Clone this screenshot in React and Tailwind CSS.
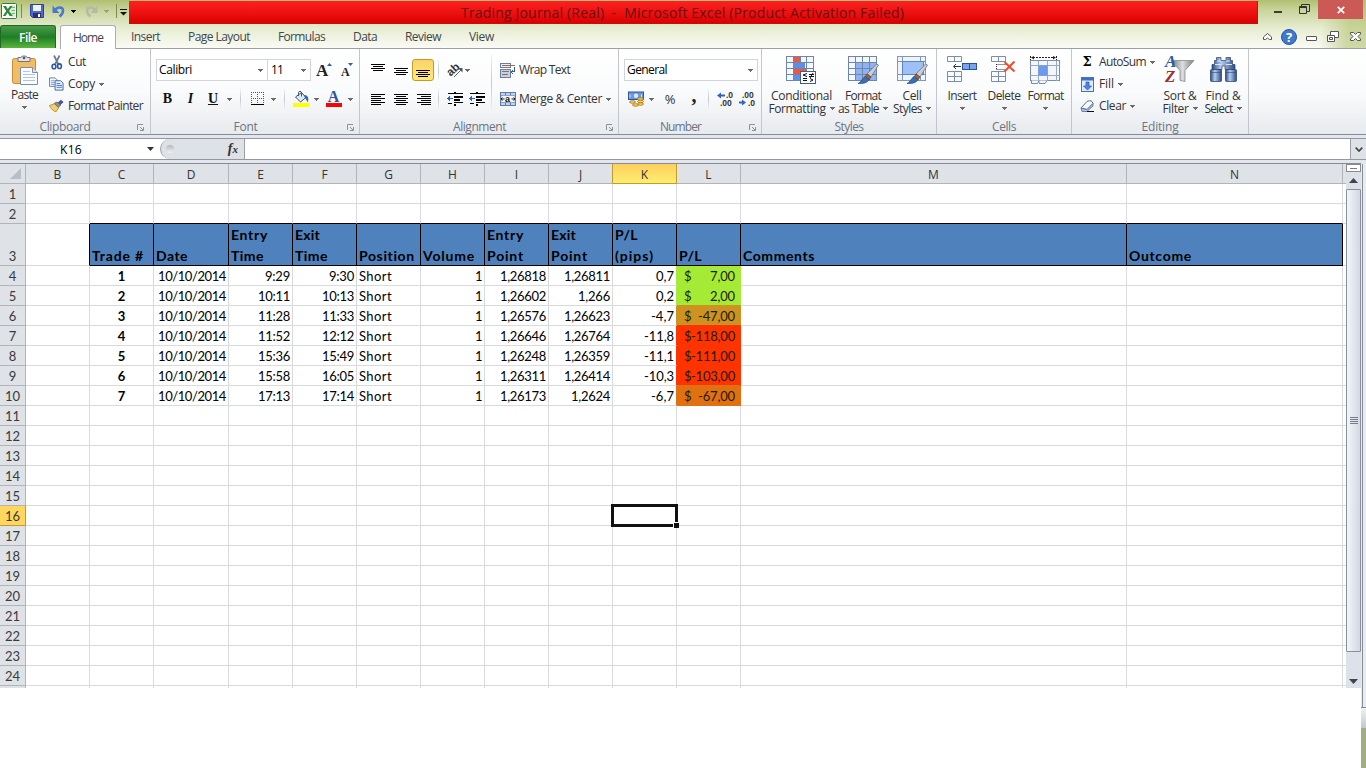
import React, { useLayoutEffect, useRef, useState } from 'react';

// Text that is tracked in or out until it fills the given width
const Fit = ({ w, children, className = '' }) => {
  const ref = useRef(null);
  const [spacing, setSpacing] = useState(0);

  useLayoutEffect(() => {
    const natural = ref.current.getBoundingClientRect().width;
    setSpacing((w - natural) / String(children).length);
  }, [w, children]);

  return (
    <span ref={ref} className={`inline-block whitespace-pre shrink-0 ${className}`} style={{ letterSpacing: `${spacing}px` }}>
      {children}
    </span>
  );
};

const Caret = ({ className = '' }) => (
  <svg width="5" height="3" viewBox="0 0 5 3" className={`shrink-0 ${className}`} shapeRendering="crispEdges">
    <path d="M0 0h5v1H4v1H3v1H2V2H1V1H0z" fill="#6b6b6b" />
  </svg>
);

const Sep = ({ className = '' }) => (
  <div className={`w-px bg-linear-to-b from-[#f0f1f3] via-[#c4c9d0] to-[#f0f1f3] ${className}`} />
);

/* ---------- Icons ---------- */

const ExcelIcon = () => (
  <svg width="16" height="16" viewBox="0 0 16 16">
    <rect x=".5" y=".5" width="15" height="15" rx="1" fill="#fff" stroke="#2f7d3b" />
    <path d="M10 2h4v12h-4z" fill="#d9ecd4" />
    <path d="M10.500 4.500h3.500M10.500 7.500h3.500M10.500 10.500h3.500" stroke="#7db475" />
    <path d="M2 3h3l1.800 3L9 3h2.500L8.200 8l3.600 5H8.700L6.600 9.800 4.500 13H1.800l3.400-5z" fill="#2c8a3a" />
  </svg>
);

const SaveIcon = () => (
  <svg width="14" height="14" viewBox="0 0 14 14">
    <path d="M.5.5h13v13h-11l-2-2z" fill="#4f68c8" stroke="#2f3f9c" />
    <rect x="3" y="1" width="8" height="6" fill="#eef3fb" />
    <rect x="3" y="9" width="8" height="5" fill="#2a3172" />
    <rect x="8" y="10" width="2" height="3" fill="#fff" />
  </svg>
);

const UndoIcon = ({ color }) => (
  <svg width="13" height="13" viewBox="0 0 13 13" fill="none">
    <path d="M3 5.500C5 1.500 10.800 1.500 11 5.500c.1 2.500-1.500 4.500-3.500 6" stroke={color} strokeWidth="2.500" />
    <path d="M.5.5v7.500h7z" fill={color} />
  </svg>
);

const PasteIcon = () => (
  <svg width="28" height="32" viewBox="0 0 28 32">
    <rect x="1.500" y="3.500" width="23" height="25" rx="2" fill="#f0bd66" stroke="#c98b35" />
    <path d="M7 2.500h3C10 .5 16 .5 16 2.500h3v4H7z" fill="#e4e6e9" stroke="#6f7680" />
    <circle cx="13" cy="3" r="1.300" fill="#555" />
    <path d="M9.500 12.500h12l5 5v12h-17z" fill="#f8fbff" stroke="#7c8da6" />
    <path d="M21.500 12.500v5h5" fill="#dbe5f1" stroke="#7c8da6" />
    <path d="M12 16.500h7M12 19.500h12M12 22.500h12M12 25.500h12" stroke="#b5c4d8" />
  </svg>
);

const CutIcon = () => (
  <svg width="12" height="15" viewBox="0 0 12 15" fill="none">
    <path d="M3 .5l4.500 9M8.500.5L4 9.500" stroke="#6d7a90" strokeWidth="1.700" />
    <ellipse cx="3" cy="11.500" rx="1.900" ry="2.300" stroke="#2e58a6" strokeWidth="1.600" />
    <ellipse cx="8.500" cy="11.200" rx="1.900" ry="2.300" stroke="#2e58a6" strokeWidth="1.600" />
  </svg>
);

const CopyIcon = () => (
  <svg width="16" height="14" viewBox="0 0 16 14">
    <path d="M.5.500h6l2 2v7h-8z" fill="#f4f8fd" stroke="#5f7fae" />
    <path d="M2 3.500h4M2 5.500h4M2 7.500h4" stroke="#7c9bd0" />
    <path d="M6.500 3.500h6l2.500 2.500v7.500H6.500z" fill="#e9f1fc" stroke="#3f66a8" />
    <path d="M8 6.500h4M8 8.500h6M8 10.500h6" stroke="#4f78c0" />
  </svg>
);

const BrushIcon = () => (
  <svg width="17" height="14" viewBox="0 0 17 14">
    <path d="M.5 6.500L6 4.500l5 4.500-3 4.500C4.500 12.500 2 10 .5 6.500z" fill="#efd06c" stroke="#b98a30" />
    <path d="M6 4l3-1.500 4 3.500-2 2.500z" fill="#8f9096" stroke="#555a66" strokeWidth=".8" />
    <path d="M10.500 3l3-2.500 2.500 2-3 3z" fill="#4b57a0" stroke="#2d3571" strokeWidth=".7" />
  </svg>
);

const GrowIcon = ({ small }) => (
  <div className="relative flex items-end w-[16px] h-[17px] pb-px">
    <span className={small ? "font-['Liberation_Serif'] font-bold text-[12px] leading-[12px] text-[#222] pl-1" : "font-['Liberation_Serif'] font-bold text-[17px] leading-[15px] text-[#222]"}>A</span>
    <svg width="5" height="3" viewBox="0 0 5 3" className="absolute right-0 top-[1px]">
      <path d={small ? 'M0 0h5L2.500 3z' : 'M0 3h5L2.500 0z'} fill="#2f5ba8" />
    </svg>
  </div>
);

const BordersIcon = () => (
  <svg width="13" height="14" viewBox="0 0 13 14" shapeRendering="crispEdges">
    <path d="M0 .5h13M0 6.500h13" stroke="#555" strokeDasharray="1 1" />
    <path d="M.5 0v12M6.500 0v12M12.500 0v12" stroke="#555" strokeDasharray="1 1" />
    <path d="M0 12h13v1H0z" fill="#000" />
  </svg>
);

const BucketIcon = () => (
  <svg width="16" height="16" viewBox="0 0 16 16">
    <path d="M2.500 6l6-4.500 4.500 5-5.500 4.500z" fill="#dce8f6" stroke="#3b5272" />
    <path d="M5.500 5V1.500c0-1.500 3-1.500 3 0v4" fill="none" stroke="#4a5361" />
    <path d="M11 4c3.500 0 5 2 4 7-1.500-.5-1.500-3-3-4z" fill="#2f66b5" />
    <rect y="12" width="16" height="4" fill="#ff0" />
  </svg>
);

const Lines = ({ rows, className = '' }) => (
  <svg width="14" height="13" viewBox="0 0 14 13" className={className} shapeRendering="crispEdges">
    {rows.map(([x, y, w]) => <rect key={y} x={x} y={y} width={w} height="1" fill="#000" />)}
  </svg>
);

const OrientIcon = () => (
  <svg width="17" height="16" viewBox="0 0 17 16" className="overflow-visible">
    <text x="-1" y="11" transform="rotate(-42 6 7)" fontFamily="Liberation Sans" fontSize="11.500" fontWeight="bold" fill="#333">ab</text>
    <path d="M7 15l7-7" stroke="#666" />
    <path d="M15.500 6v4.500l-4.500-4.500z" fill="#555" />
  </svg>
);

const IndentIcon = () => (
  <svg width="17" height="14" viewBox="0 0 17 14" shapeRendering="crispEdges">
    <path d="M7 0h2v1H7zM1 1h15v1H1zM7 4h9v2H7zM7 7h6v2H7zM7 10h9v1H7zM7 12h2v2H7zM1 11h4v1H1z" fill="#000" />
    <path d="M0 6.500L3 4v2h3v1H3v2z" fill="#2e63c4" />
  </svg>
);

const WrapIcon = () => (
  <svg width="17" height="15" viewBox="0 0 17 15" shapeRendering="crispEdges">
    <path d="M.5.500h11v4H.5z" fill="#e4eefb" stroke="#63789b" />
    <path d="M2 2.500h14" stroke="#a3603b" />
    <path d="M.5 6.500h11v8H.5z" fill="#bfd2ee" stroke="#63789b" />
    <path d="M2 9h8M2 11.500h6" stroke="#a3603b" />
    <path d="M15.500 4v5h-3M14 7l-2 2 2 2" fill="none" stroke="#31538f" />
  </svg>
);

const MergeIcon = () => (
  <svg width="16" height="14" viewBox="0 0 16 14">
    <rect x=".5" y=".5" width="15" height="13" fill="#bdd2ef" stroke="#5f7ba7" />
    <path d="M5.500.5v3M10.500.5v3M5.500 10.500v3M10.500 10.500v3" stroke="#5f7ba7" />
    <rect x="1" y="3.500" width="14" height="7" fill="#f5f9ff" stroke="#5f7ba7" strokeWidth=".6" />
    <text x="5" y="9.500" fontFamily="Liberation Sans" fontSize="9" fontWeight="bold" fill="#111">a</text>
    <path d="M1.500 7h3M1 7l1.500-1.500M1 7l1.500 1.500M11.500 7h3M15 7l-1.500-1.500M15 7l-1.500 1.500" stroke="#222" />
  </svg>
);

const MoneyIcon = () => (
  <svg width="16" height="16" viewBox="0 0 16 16">
    <rect x=".5" y="1" width="15" height="7.500" fill="#6d97dd" stroke="#2e559e" />
    <circle cx="8" cy="4.700" r="2.200" fill="#dbe8fb" />
    <path d="M2 3.500v3M13.500 3.500v3" stroke="#dbe8fb" />
    <ellipse cx="12.500" cy="8" rx="3" ry="1.300" fill="#f7cf55" stroke="#a9761b" strokeWidth=".8" />
    <ellipse cx="12.500" cy="10.500" rx="3" ry="1.300" fill="#f7cf55" stroke="#a9761b" strokeWidth=".8" />
    <ellipse cx="12.500" cy="13" rx="3" ry="1.300" fill="#f7cf55" stroke="#a9761b" strokeWidth=".8" />
    <ellipse cx="4.500" cy="11" rx="3" ry="1.300" fill="#f7cf55" stroke="#a9761b" strokeWidth=".8" />
    <ellipse cx="7.500" cy="14" rx="3" ry="1.300" fill="#f7cf55" stroke="#a9761b" strokeWidth=".8" />
  </svg>
);

const DecimalIcon = ({ less }) => (
  <svg width="16" height="14" viewBox="0 0 16 14" className="overflow-visible" fontFamily="Liberation Sans" fontSize="8.500" fontWeight="bold" fill="#333">
    <text x={less ? 3 : 9} y="6">{less ? '.00' : '.0'}</text>
    <text x={less ? 9 : 3} y="13.500">{less ? '.0' : '.00'}</text>
    {less
      ? <path d="M0 9.500h3V7.500l4 3-4 3v-2H0z" fill="#2e63c4" />
      : <path d="M8 2.500H4v-2L0 3.500l4 3v-2h4z" fill="#2e63c4" />}
  </svg>
);

const CondIcon = () => (
  <svg width="31" height="29" viewBox="0 0 31 29">
    <rect x=".5" y=".5" width="27" height="24" fill="#f3f8ff" />
    <rect x="8" y="0" width="6" height="7" fill="#f0553f" />
    <rect x="8" y="7" width="11" height="6" fill="#5c8fe8" />
    <rect x="8" y="13" width="12" height="6" fill="#f0553f" />
    <rect x="8" y="19" width="6" height="6" fill="#5c8fe8" />
    <path d="M.5 0v25M7.500 0v25M14.500 0v7M20.500 0v25M27.500 0v25M0 .5h28M0 6.500h28M0 12.500h28M0 18.500h28M0 24.500h28" stroke="#6f86aa" fill="none" />
    <rect x="14.500" y="15.500" width="15" height="12" fill="#f7faff" stroke="#4d5d77" />
    <path d="M21 17.500l-4 1.500 4 1.500M17 22.500h4M17 24.500h4M23 18.500h5M23 20.500h5M27 17l-3 5M24 22.500l3 1.500-3 1.500" stroke="#111" fill="none" />
  </svg>
);

const Brush = () => (
  <>
    <path d="M28.500 8l2 1-7.500 12-4-3z" fill="#c9ced6" stroke="#6d737d" strokeWidth=".8" />
    <path d="M19 18l4 3-2 3-4-3z" fill="#a5602e" stroke="#6b3a17" strokeWidth=".7" />
    <path d="M17 20.500l4 3c-2 4-6 4-11 4 3-1 4-5 7-7z" fill="#3c6eb8" stroke="#254b85" strokeWidth=".7" />
  </>
);

const TableIcon = () => (
  <svg width="31" height="29" viewBox="0 0 31 29">
    <rect x=".5" y=".5" width="28" height="24" fill="#f3f8ff" />
    <rect x="7" y="6" width="22" height="19" fill="#8db3f2" />
    <path d="M.5 0v25M7.500 0v25M14.500 0v25M21.500 0v25M28.500 0v25M0 .5h29M0 6.500h29M0 12.500h29M0 18.500h29M0 24.500h29" stroke="#6f86aa" />
    <Brush />
  </svg>
);

const CellStyleIcon = () => (
  <svg width="31" height="29" viewBox="0 0 31 29">
    <rect x=".5" y=".5" width="28" height="24" fill="#eef4fd" />
    <path d="M.5 0v25M5.500 0v25M23.500 0v25M28.500 0v25M0 .5h29M0 5.500h29M0 18.500h29M0 24.500h29" stroke="#8296b6" />
    <rect x="5.500" y="5.500" width="21" height="13" fill="#9dc0f7" stroke="#5e83c5" />
    <Brush />
  </svg>
);

const InsertIcon = () => (
  <svg width="31" height="28" viewBox="0 0 31 28">
    <g fill="#f8fbff" stroke="#7d8da8">
      <path d="M.5.500h14v5H.5zM7.500.5v5M.5 15.500h14v10H.5zM7.500 15.500v10M.5 20.500h14" />
    </g>
    <rect x="15.500" y="7.500" width="14" height="6" fill="#7aa3ee" stroke="#2e5096" />
    <path d="M22.500 8v6" stroke="#2e5096" />
    <path d="M7 10.500h7M6.500 10.500L9 8M6.500 10.500L9 13" stroke="#243a63" fill="none" />
  </svg>
);

const DeleteIcon = () => (
  <svg width="26" height="28" viewBox="0 0 26 28">
    <g fill="#f8fbff" stroke="#7d8da8">
      <path d="M.5.500h14v5H.5zM7.500.5v5M.5 15.500h14v10H.5zM7.500 15.500v10M.5 20.500h14" />
    </g>
    <path d="M5.500 8.500h9M5.500 13.500h9M5.500 8v6" stroke="#333" strokeDasharray="1 1" />
    <path d="M13.500 6l10 9.500M23.500 5.500L13.500 15.500" stroke="#ef4b30" strokeWidth="2" />
  </svg>
);

const FormatIcon = () => (
  <svg width="31" height="30" viewBox="0 0 31 30">
    <path d="M.5 0v4M26.500 0v4M3 1.500h22" stroke="#222" strokeDasharray="2 1" />
    <path d="M1 1.500L4 0v3.500zM26 1.500L23 0v3.500z" fill="#222" />
    <rect x=".5" y="4.500" width="29" height="20" fill="#f3f7fd" stroke="#7d8da8" />
    <path d="M0 9.500h30M0 19.500h30M8.500 5v20M17.500 5v20M26.500 5v20" stroke="#9aa9c2" />
    <rect x="8.500" y="9.500" width="9" height="10" fill="#6c98ee" />
    <path d="M1.500 24.500v3h6l1.500-3M9 24.500v3h6l2-3" fill="#f3f7fd" stroke="#7d8da8" />
  </svg>
);

const FillIcon = () => (
  <svg width="13" height="15" viewBox="0 0 13 15">
    <rect x=".5" y=".5" width="12" height="14" fill="#dfeafa" stroke="#4a72b6" />
    <rect x="1" y="1" width="11" height="2.500" fill="#3f6fc4" />
    <path d="M5 5h3v4h2.500L6.500 13 2.500 9H5z" fill="#4a86e8" stroke="#2457aa" strokeWidth=".7" />
  </svg>
);

const EraserIcon = () => (
  <svg width="14" height="12" viewBox="0 0 14 12">
    <path d="M1 8l6-6.500c1-.8 4.500-1 5 0l1 2L7 9.500z" fill="#f4f8ff" stroke="#5a6e92" />
    <path d="M7 9.500l6-6v2.500l-6 5.500H2L1 8.300z" fill="#a9c3ec" stroke="#5a6e92" strokeWidth=".8" />
    <path d="M7 11.500h7" stroke="#111" />
  </svg>
);

const SortIcon = () => (
  <div className="relative w-[30px] h-[29px]">
    <svg width="30" height="28" viewBox="0 0 30 28">
      <defs>
        <linearGradient id="funnel">
          <stop offset="0" stopColor="#6f7276" />
          <stop offset=".5" stopColor="#dcdedf" />
          <stop offset="1" stopColor="#7b7e83" />
        </linearGradient>
      </defs>
      <path d="M6 4.500h23l-9 10v11l-5-1v-10z" fill="url(#funnel)" stroke="#7d8084" strokeWidth=".7" />
    </svg>
    <div className="absolute left-0 -top-px flex flex-col font-['Liberation_Serif'] font-bold italic text-[17px]">
      <span className="h-[14px] leading-[14px] text-[#2c5aa8]">A</span>
      <span className="h-[15px] leading-[15px] text-[#9c2f2f]">Z</span>
    </div>
  </div>
);

const FindIcon = () => (
  <svg width="27" height="25" viewBox="0 0 27 25" className="mt-px">
    <defs>
      <linearGradient id="tube">
        <stop offset="0" stopColor="#2b4a80" />
        <stop offset=".4" stopColor="#b6cdf0" />
        <stop offset="1" stopColor="#2b4a80" />
      </linearGradient>
    </defs>
    <path d="M6.500.5h4.500v3h5v-3h4.500v3h2v4h2.500v5H15V9h-3v3.500H2v-5h2.500v-4h2z" fill="url(#tube)" stroke="#2b4473" strokeWidth=".7" />
    <path d="M7 4h4M16 4h4M5 7.500h6M16 7.500h6" stroke="#dbe7f8" />
    <rect x=".5" y="12.500" width="11" height="12" rx="1" fill="url(#tube)" stroke="#233b68" strokeWidth=".7" />
    <rect x="15.500" y="12.500" width="11" height="12" rx="1" fill="url(#tube)" stroke="#233b68" strokeWidth=".7" />
    <path d="M1 15.500h10M16 15.500h10" stroke="#2b4a80" strokeWidth=".6" />
  </svg>
);

/* ---------- Ribbon ---------- */

const Group = ({ label, labelW, launcher, className = '', children }) => (
  <div className={`flex flex-col h-[85px] shrink-0 border-r border-[#c3c7cd] ${className}`}>
    <div className="h-[69px] flex">{children}</div>
    <div className={`relative h-[16px] flex items-center justify-center pt-px text-[#6b7483] ${launcher ? 'pr-[19px]' : ''}`}>
      <Fit w={labelW}>{label}</Fit>
      {launcher && (
        <svg width="7" height="7" viewBox="0 0 7 7" className="absolute right-[5px] top-[6px]" fill="none" stroke="#8b929c">
          <path d="M.5 6V.5H6M3 3l3 3M6.500 3v3.500H3" />
        </svg>
      )}
    </div>
  </div>
);

const Big = ({ icon, lines, className = '' }) => (
  <div className={`flex flex-col items-center shrink-0 ${className}`}>
    <div className="h-[33px] flex items-start justify-center">{icon}</div>
    <div className="h-[13px] leading-[13px]"><Fit w={lines[0][1]}>{lines[0][0]}</Fit></div>
    <div className="h-[13px] leading-[13px] flex items-center gap-[4px]">
      {lines[1] && <Fit w={lines[1][1]}>{lines[1][0]}</Fit>}
      <Caret />
    </div>
  </div>
);

const SmallRow = ({ icon, iconBox, text, w, caret }) => (
  <div className="h-[22px] flex items-center">
    <div className={`flex items-center justify-center ${iconBox}`}>{icon}</div>
    <Fit w={w}>{text}</Fit>
    {caret && <Caret className="ml-[4px]" />}
  </div>
);

const TABS = [
  ['Insert', 29, 'ml-[15px]'],
  ['Page Layout', 62, 'ml-[28px]'],
  ['Formulas', 47, 'ml-[28px]'],
  ['Data', 24, 'ml-[28px]'],
  ['Review', 36, 'ml-[28px]'],
  ['View', 25, 'ml-[28px]'],
];

const TitleBar = () => (
  <div className="h-[25px] flex">
    <div className="w-[129px] flex items-center pl-[1px] pb-[3px]">
      <ExcelIcon />
      <div className="w-px h-[14px] bg-[#7e8a58] ml-[4px]" />
      <div className="ml-[8px]"><SaveIcon /></div>
      <div className="ml-[8px]"><UndoIcon color="#4a78cf" /></div>
      <Caret className="ml-[6px] brightness-0" />
      <div className="ml-[9px] -scale-x-100"><UndoIcon color="#b4baa6" /></div>
      <Caret className="ml-[6px] opacity-50" />
      <div className="w-px h-[14px] bg-[#7e8a58] ml-[7px]" />
      <svg width="7" height="7" viewBox="0 0 7 7" className="ml-[3px] mt-[3px] shrink-0">
        <path d="M0 .5h7" stroke="#111" />
        <path d="M0 3h7L3.500 6.500z" fill="#111" />
      </svg>
    </div>
    <div className="w-[1129px] h-[23px] mt-px flex items-center justify-center bg-linear-to-b from-[#ff2020] to-[#dc0000] border-b border-r border-[#c01010] text-[14px] text-[#6b0d0d]">
      <div className="w-[20px]" />
      <Fit w={443} className="mr-[41px] pt-px">Trading Journal (Real)  -  Microsoft Excel (Product Activation Failed)</Fit>
    </div>
    <div className="flex items-start">
      <div className="w-[8px] h-[2px] mt-[11px] ml-[16px] bg-[#3c3c3c]" />
      <svg width="11" height="10" viewBox="0 0 11 10" className="ml-[17px] mt-[4px]" fill="none" stroke="#333">
        <path d="M.5 2.500h7v7h-7zM.5 3.500h7M2.500 2V.5h8v7H8" />
      </svg>
      <div className="ml-[8px] w-[45px] h-[19px] bg-[#cb5a57] flex items-center justify-center">
        <svg width="8" height="8" viewBox="0 0 8 8"><path d="M.8.8l6.400 6.400M7.200.8L.8 7.200" stroke="#fff" strokeWidth="1.700" /></svg>
      </div>
    </div>
  </div>
);

const TabBar = () => (
  <div className="h-[24px] flex text-[#3f4650]">
    <div className="w-[56px] h-[23px] rounded-t-[3px] border border-[#1e6c22] border-b-0 flex items-center justify-center text-white font-semibold bg-linear-to-b from-[#4a9b49] via-[#1f7d26] to-[#5ab53c]">
      <Fit w={18} className="pt-px">File</Fit>
    </div>
    <div className="w-[56px] h-[24px] ml-[4px] rounded-t-[3px] bg-white border border-[#a9aeb5] border-b-0 flex items-center justify-center">
      <Fit w={30}>Home</Fit>
    </div>
    <div className="flex-1 flex items-center border-b border-[#9ba0a8]">
      {TABS.map(([name, w, gap]) => (
        <Fit key={name} w={w} className={`pt-px ${gap}`}>{name}</Fit>
      ))}
      <div className="ml-auto flex items-center pr-[5px]">
        <svg width="9" height="8" viewBox="0 0 9 8" fill="#fff" stroke="#555"><path d="M.5 4l4-3.500 4 3.500v2.500h-2L4.500 5l-2 1.500h-2z" /></svg>
        <div className="ml-[9px] w-[16px] h-[16px] rounded-full bg-[#3f78cf] border border-[#2a57a3] text-white font-bold text-[13px] leading-[14px] text-center">?</div>
        <div className="ml-[9px] mt-[3px] w-[11px] h-[5px] border border-[#555] rounded-[1px] bg-white" />
        <svg width="12" height="11" viewBox="0 0 12 11" className="ml-[10px]" fill="#fff" stroke="#555">
          <path d="M3.500.5h8v6h-8z" /><path d="M.5 4.500h7v6h-7z" /><path d="M2.500 6.500h3v2h-3z" />
        </svg>
        <svg width="11" height="9" viewBox="0 0 11 9" className="ml-[11px]">
          <path d="M.5.500h3l2 2 2-2h3v1.500L8 4.500 10.500 7v1.500h-3l-2-2-2 2h-3V7L3 4.500.5 2z" fill="#fff" stroke="#555" />
        </svg>
      </div>
    </div>
  </div>
);

const Ribbon = () => (
  <div className="h-[85px] flex bg-linear-to-b from-white via-[#fafbfc] to-[#e7eaee] text-[#333]">
    <Group label="Clipboard" labelW={51} launcher className="w-[151px] pr-[1px]">
      <Big className="w-[49px] pt-[6px]" icon={<PasteIcon />} lines={[['Paste', 27]]} />
      <div className="pt-[2px]">
        <SmallRow icon={<CutIcon />} iconBox="w-[15px] mr-[4px]" text="Cut" w={18} />
        <SmallRow icon={<CopyIcon />} iconBox="w-[15px] mr-[4px]" text="Copy" w={27} caret />
        <SmallRow icon={<BrushIcon />} iconBox="w-[15px] mr-[4px]" text="Format Painter" w={75} />
      </div>
    </Group>

    <Group label="Font" labelW={24} launcher className="w-[209px]">
      <div className="pt-[10px] pl-[5px]">
        <div className="h-[22px] flex items-center text-black">
          <div className="w-[112px] h-[22px] border border-[#d2d5da] bg-white flex items-center justify-between pl-[2px] pr-[4px]">
            <Fit w={33}>Calibri</Fit><Caret />
          </div>
          <div className="w-[43px] h-[22px] border border-l-0 border-[#d2d5da] bg-white flex items-center justify-between pl-[3px] pr-[4px]">
            <Fit w={12}>11</Fit><Caret />
          </div>
          <div className="ml-[5px]"><GrowIcon /></div>
          <div className="ml-[5px]"><GrowIcon small /></div>
        </div>
        <div className="h-[22px] mt-[7px] flex items-center font-['Liberation_Serif'] text-[14px] text-[#111]">
          <div className="w-[23px] text-center font-bold">B</div>
          <div className="w-[23px] text-center font-bold italic">I</div>
          <div className="w-[22px] text-center font-bold underline">U</div>
          <div className="w-[11px] flex justify-center"><Caret /></div>
          <div className="w-[10px] flex justify-center"><Sep className="h-[20px]" /></div>
          <div className="w-[24px] flex justify-center"><BordersIcon /></div>
          <div className="w-[9px] flex justify-center"><Caret /></div>
          <div className="w-[12px] flex justify-center"><Sep className="h-[20px]" /></div>
          <div className="w-[22px] flex justify-center"><BucketIcon /></div>
          <div className="w-[9px] flex justify-center"><Caret /></div>
          <div className="w-[25px] flex flex-col items-center">
            <span className="text-[16px] leading-[12px] font-bold text-[#2f549b]">A</span>
            <div className="w-[16px] h-[4px] bg-[#f00]" />
          </div>
          <div className="w-[8px] flex justify-center"><Caret /></div>
        </div>
      </div>
    </Group>

    <Group label="Alignment" labelW={53} launcher className="w-[259px]">
      <div className="pt-[10px] pl-[6px] w-[131px]">
        <div className="h-[22px] flex items-center">
          <div className="w-[23px] flex justify-center"><Lines rows={[[0, 0, 14], [2, 2, 10], [0, 4, 14], [2, 6, 10]]} /></div>
          <div className="w-[23px] flex justify-center"><Lines rows={[[0, 4, 14], [2, 6, 10], [0, 8, 14], [2, 10, 10]]} /></div>
          <div className="w-[22px] h-[22px] flex justify-center items-center rounded-[3px] border border-[#c29b29] bg-linear-to-b from-[#fbd26b] to-[#ffe97a]">
            <Lines rows={[[0, 6, 14], [2, 8, 10], [0, 10, 14], [2, 12, 10]]} />
          </div>
          <div className="w-[8px] flex justify-center"><Sep className="h-[20px]" /></div>
          <div className="w-[20px] ml-[5px]"><OrientIcon /></div>
          <Caret className="-ml-[2px]" />
        </div>
        <div className="h-[22px] mt-[7px] flex items-center">
          <div className="w-[23px] flex justify-center"><Lines rows={[[0, 1, 14], [0, 3, 10], [0, 5, 14], [0, 7, 10], [0, 9, 14], [0, 11, 10]]} /></div>
          <div className="w-[23px] flex justify-center"><Lines rows={[[0, 1, 14], [2, 3, 10], [0, 5, 14], [2, 7, 10], [0, 9, 14], [2, 11, 10]]} /></div>
          <div className="w-[23px] flex justify-center"><Lines rows={[[0, 1, 14], [4, 3, 10], [0, 5, 14], [4, 7, 10], [0, 9, 14], [4, 11, 10]]} /></div>
          <div className="w-[7px] flex justify-center"><Sep className="h-[20px]" /></div>
          <div className="ml-[5px] w-[22px]"><IndentIcon /></div>
          <IndentIcon />
        </div>
      </div>
      <Sep className="h-[56px] mt-[6px]" />
      <div className="pt-[10px] pl-[8px]">
        <SmallRow icon={<WrapIcon />} iconBox="w-[16px] mr-[3px]" text="Wrap Text" w={51} />
        <div className="h-[7px]" />
        <SmallRow icon={<MergeIcon />} iconBox="w-[16px] mr-[3px]" text="Merge & Center" w={83} caret />
      </div>
    </Group>

    <Group label="Number" labelW={41} launcher className="w-[143px]">
      <div className="pt-[10px] pl-[5px]">
        <div className="w-[134px] h-[22px] border border-[#d2d5da] bg-white flex items-center justify-between pl-[2px] pr-[4px] text-black">
          <Fit w={40}>General</Fit><Caret />
        </div>
        <div className="h-[22px] mt-[7px] flex items-center">
          <div className="ml-[4px]"><MoneyIcon /></div>
          <Caret className="ml-[5px]" />
          <div className="w-[30px] text-center text-[13px] pl-[2px]">%</div>
          <div className="w-[20px] text-center font-['Liberation_Serif'] font-bold text-[20px] leading-[10px] pb-[8px] text-[#222]">,</div>
          <Sep className="h-[20px] ml-[4px]" />
          <div className="ml-[8px]"><DecimalIcon /></div>
          <div className="ml-[6px]"><DecimalIcon less /></div>
        </div>
      </div>
    </Group>

    <Group label="Styles" labelW={29} className="w-[175px]">
      <Big className="w-[69px] ml-[5px] pt-[7px]" icon={<CondIcon />} lines={[['Conditional', 61], ['Formatting', 57]]} />
      <Big className="w-[54px] pt-[7px]" icon={<TableIcon />} lines={[['Format', 36], ['as Table', 41]]} />
      <Big className="w-[44px] pt-[7px]" icon={<CellStyleIcon />} lines={[['Cell', 19], ['Styles', 29]]} />
    </Group>

    <Group label="Cells" labelW={24} className="w-[135px]">
      <Big className="w-[40px] ml-[5px] pt-[7px]" icon={<InsertIcon />} lines={[['Insert', 29]]} />
      <Big className="w-[44px] pt-[7px]" icon={<DeleteIcon />} lines={[['Delete', 33]]} />
      <Big className="w-[39px] pt-[7px]" icon={<FormatIcon />} lines={[['Format', 36]]} />
    </Group>

    <Group label="Editing" labelW={37} className="w-[177px]">
      <div className="pt-[2px] pl-[7px] w-[86px]">
        <SmallRow icon={<span className="font-['DejaVu_Serif'] font-bold text-[13px] text-black">Σ</span>} iconBox="w-[16px] mr-[4px]" text="AutoSum" w={47} caret />
        <SmallRow icon={<FillIcon />} iconBox="w-[16px] mr-[4px]" text="Fill" w={15} caret />
        <SmallRow icon={<EraserIcon />} iconBox="w-[16px] mr-[4px]" text="Clear" w={27} caret />
      </div>
      <Big className="w-[44px] pt-[7px]" icon={<SortIcon />} lines={[['Sort &', 33], ['Filter', 26]]} />
      <Big className="w-[42px] pt-[7px]" icon={<FindIcon />} lines={[['Find &', 35], ['Select', 28]]} />
    </Group>
  </div>
);

const FormulaBar = () => (
  <div className="h-[30px] bg-[#e4e6ee] border-t border-[#868b94]">
    <div className="h-[22px] mt-[3px] flex border-y border-[#9298a2] bg-white">
      <div className="w-[160px] flex items-center justify-end pr-[6px] text-black">
        <Fit w={22} className="mr-[65px] pt-px">K16</Fit>
        <svg width="7" height="4" viewBox="0 0 7 4"><path d="M0 0h7L3.500 4z" fill="#333" /></svg>
      </div>
      <div className="w-[85px] rounded-l-full bg-[#dee1e6] border-l border-r border-[#9aa0a9] flex items-center justify-between pl-[5px] pr-[6px]">
        <div className="w-[8px] h-[8px] rounded-full bg-linear-to-b from-[#b3b6bb] to-[#f2f3f5]" />
        <span className="font-['Liberation_Serif'] italic font-bold text-[14px] leading-[14px] text-[#333]">f<span className="text-[11px]">x</span></span>
      </div>
      <div className="flex-1" />
      <div className="w-[16px] bg-[#dee1e6] border-l border-[#9aa0a9] flex items-center justify-center">
        <svg width="8" height="5" viewBox="0 0 8 5"><path d="M.7.700L4 4 7.300.7" fill="none" stroke="#444" strokeWidth="1.700" /></svg>
      </div>
    </div>
  </div>
);

/* ---------- Sheet ---------- */

const COLS = [
  { id: 'B', cls: 'w-[64px]' },
  { id: 'C', cls: 'w-[64px]', head: ['Trade #'], hw: [52] },
  { id: 'D', cls: 'w-[75px]', head: ['Date'], hw: [32] },
  { id: 'E', cls: 'w-[64px]', head: ['Entry', 'Time'], hw: [37, 33] },
  { id: 'F', cls: 'w-[64px]', head: ['Exit', 'Time'], hw: [25, 33] },
  { id: 'G', cls: 'w-[64px]', head: ['Position'], hw: [56] },
  { id: 'H', cls: 'w-[64px]', head: ['Volume'], hw: [52] },
  { id: 'I', cls: 'w-[64px]', head: ['Entry', 'Point'], hw: [37, 37] },
  { id: 'J', cls: 'w-[64px]', head: ['Exit', 'Point'], hw: [25, 37] },
  { id: 'K', cls: 'w-[64px]', head: ['P/L', '(pips)'], hw: [23, 39] },
  { id: 'L', cls: 'w-[64px]', head: ['P/L'], hw: [23] },
  { id: 'M', cls: 'w-[386px]', head: ['Comments'], hw: [72] },
  { id: 'N', cls: 'w-[216px]', head: ['Outcome'], hw: [63] },
];

const TRADES = [
  { c: '1', e: '9:29', f: '9:30', i: '1,26818', j: '1,26811', k: '0,7', l: '7,00', bg: 'bg-[#a5eb35] border-b-[#a5eb35] border-r-[#a5eb35]', left: 'border-r-[#a5eb35]' },
  { c: '2', e: '10:11', f: '10:13', i: '1,26602', j: '1,266', k: '0,2', l: '2,00', bg: 'bg-[#a5eb35] border-b-[#cd921f] border-r-[#a5eb35]', left: 'border-r-[#a5eb35]' },
  { c: '3', e: '11:28', f: '11:33', i: '1,26576', j: '1,26623', k: '-4,7', l: '-47,00', bg: 'bg-[#cd921f] border-b-[#ff3300] border-r-[#cd921f]', left: 'border-r-[#cd921f]' },
  { c: '4', e: '11:52', f: '12:12', i: '1,26646', j: '1,26764', k: '-11,8', l: '-118,00', bg: 'bg-[#ff3300] border-b-[#ff3300] border-r-[#ff3300]', left: 'border-r-[#ff3300]' },
  { c: '5', e: '15:36', f: '15:49', i: '1,26248', j: '1,26359', k: '-11,1', l: '-111,00', bg: 'bg-[#ff3300] border-b-[#ff3300] border-r-[#ff3300]', left: 'border-r-[#ff3300]' },
  { c: '6', e: '15:58', f: '16:05', i: '1,26311', j: '1,26414', k: '-10,3', l: '-103,00', bg: 'bg-[#ff3300] border-b-[#e07010] border-r-[#ff3300]', left: 'border-r-[#ff3300]' },
  { c: '7', e: '17:13', f: '17:14', i: '1,26173', j: '1,2624', k: '-6,7', l: '-67,00', bg: 'bg-[#e07010] border-b-[#e07010] border-r-[#e07010]', left: 'border-r-[#e07010]' },
];

// Width of a number at 7px a digit
const numWidth = (s) => [...s].reduce((sum, ch) => {
  if (ch === ',' || ch === ':') return sum + 4;
  if (ch === '-') return sum + 5;
  if (ch === '/') return sum + 6;
  return sum + 7;
}, 0);

const Num = ({ children, className }) => <Fit w={numWidth(children)} className={className}>{children}</Fit>;

const cellContent = (id, t) => {
  switch (id) {
    case 'C': return <div className="w-full text-center font-bold">{t.c}</div>;
    case 'D': return <Num className="ml-auto">10/10/2014</Num>;
    case 'E': return <Num className="ml-auto">{t.e}</Num>;
    case 'F': return <Num className="ml-auto">{t.f}</Num>;
    case 'G': return <Fit w={33}>Short</Fit>;
    case 'H': return <Num className="ml-auto">1</Num>;
    case 'I': return <Num className="ml-auto">{t.i}</Num>;
    case 'J': return <Num className="ml-auto">{t.j}</Num>;
    case 'K': return <Num className="ml-auto">{t.k}</Num>;
    case 'L': return (
      <div className="w-full flex justify-between pl-[5px] pr-[3px] text-[#1c1c10]">
        <span className="w-[7px]">$</span><Num>{t.l}</Num>
      </div>
    );
    default: return null;
  }
};

const RowHead = ({ n, className = '' }) => (
  <div className={`w-[26px] shrink-0 flex justify-center border-r border-b ${n === 16 ? 'bg-[#ffd75e] border-[#c29b29]' : 'bg-[#dfe2e7] border-[#b1b5ba]'} text-[#3a3a3a] ${className}`}>
    {n <= 24 ? n : null}
  </div>
);

const SheetRow = ({ n }) => {
  const trade = TRADES[n - 4];
  return (
    <div className="h-[20px] flex">
      <RowHead n={n} className="items-center pt-px" />
      {COLS.map(({ id, cls }) => {
        let border = 'border-[#d9dadc]';
        if (n === 2 && id !== 'B') border = 'border-r-[#d9dadc] border-b-black';
        if (trade && id === 'K') border = `border-b-[#d9dadc] ${trade.left}`;
        if (trade && id === 'L') border = trade.bg;
        return (
          <div key={id} className={`relative shrink-0 flex items-center px-[2px] pt-px border-r border-b ${cls} ${border}`}>
            {trade && cellContent(id, trade)}
            {n === 16 && id === 'K' && (
              <div className="absolute z-10 -left-[2px] -top-[2px] w-[67px] h-[23px] border-[3px] border-[#111]">
                <div className="absolute -right-[4px] -bottom-[4px] w-[6px] h-[6px] bg-[#111] border-l border-t border-white" />
              </div>
            )}
          </div>
        );
      })}
      <div className="w-[3px] border-b border-[#d9dadc]" />
    </div>
  );
};

const HeaderRow = () => (
  <div className="h-[42px] flex">
    <RowHead n={3} className="items-end" />
    {COLS.map(({ id, cls, head, hw }) => (head ? (
      <div key={id} className={`shrink-0 flex flex-col justify-end pl-[2px] border-r border-b border-black bg-[#4f81bd] font-bold text-[14px] leading-[21px] ${cls}`}>
        {head.map((line, i) => <div key={line} className="h-[21px] pt-px"><Fit w={hw[i]}>{line}</Fit></div>)}
      </div>
    ) : (
      <div key={id} className={`shrink-0 border-r border-b border-r-black border-b-[#d9dadc] ${cls}`} />
    )))}
    <div className="w-[3px] border-b border-[#d9dadc]" />
  </div>
);

const colHeadStyle = (id) => {
  if (id === 'K') return 'bg-linear-to-b from-[#fdcf5c] to-[#ffee73] border-[#c29b29]';
  if (id === 'J') return 'border-b-[#b1b5ba] border-r-[#c29b29]';
  return 'border-[#b1b5ba]';
};

const Sheet = () => (
  <div className="w-[1346px] h-[524px] overflow-hidden bg-white text-black font-['Lato',sans-serif] text-[13px] leading-[18px]">
    <div className="h-[20px] flex bg-[#dfe2e7] text-[#333] font-['Open_Sans',sans-serif]">
      <div className="w-[26px] shrink-0 flex items-end justify-end border-r border-b border-[#b1b5ba] p-[4px]">
        <svg width="11" height="11" viewBox="0 0 11 11"><path d="M11 0v11H0z" fill="#b9bec5" /></svg>
      </div>
      {COLS.map(({ id, cls }) => (
        <div key={id} className={`shrink-0 flex items-center justify-center pt-[2px] text-[12px] border-r border-b ${cls} ${colHeadStyle(id)}`}>
          {id}
        </div>
      ))}
      <div className="w-[3px] border-b border-[#b1b5ba]" />
    </div>
    <SheetRow n={1} />
    <SheetRow n={2} />
    <HeaderRow />
    {Array.from({ length: 22 }, (_, i) => <SheetRow key={i} n={i + 4} />)}
  </div>
);

const ScrollBar = () => (
  <div className="w-[15px] h-[524px] flex flex-col items-center bg-[#dde1e9]">
    <div className="w-[15px] h-[8px] border border-[#868b94] bg-white flex items-center justify-center">
      <div className="w-[7px] h-px bg-[#777b88]" />
    </div>
    <div className="h-[17px] flex items-center justify-center">
      <svg width="9" height="5" viewBox="0 0 9 5"><path d="M0 5h9L4.500 0z" fill="#444" /></svg>
    </div>
    <div className="w-[15px] h-[463px] border border-[#8a909b] rounded-[1px] bg-linear-to-r from-[#f3f5f9] to-[#d3d8e1] flex flex-col items-center justify-center gap-px">
      <div className="w-[8px] h-px bg-[#777d88]" />
      <div className="w-[8px] h-px bg-[#777d88]" />
      <div className="w-[8px] h-px bg-[#777d88]" />
      <div className="w-[8px] h-px bg-[#777d88]" />
    </div>
    <div className="flex-1 flex items-end pb-[4px]">
      <svg width="9" height="5" viewBox="0 0 9 5"><path d="M0 0h9L4.500 5z" fill="#444" /></svg>
    </div>
  </div>
);

export default function App() {
  return (
    <div className="w-[1366px] h-[768px] overflow-hidden bg-white font-['Open_Sans',sans-serif] text-[12px] leading-[14px]">
      <div className="bg-[linear-gradient(100deg,transparent_96.500%,#b3c27299_98.500%),linear-gradient(to_bottom,#b0bf72_0px,#c8d49a_10px,#e6ecd0_28px,#fafbf6_48px)]">
        <TitleBar />
        <TabBar />
      </div>
      <Ribbon />
      <FormulaBar />
      <div className="flex">
        <div className="w-[1361px]">
          <div className="flex border-t border-[#868b94] -mt-px">
            <Sheet />
            <ScrollBar />
          </div>
        </div>
        <div className="w-[5px] h-[604px] flex flex-col">
          <div className="h-[543px] flex bg-[#e9ebf2]">
            <div className="w-px h-full ml-px bg-[#868b94]" />
          </div>
          <div className="h-[21px] border-t border-[#868b94] bg-linear-to-b from-[#f0f2f4] to-[#c3c8cd]" />
          <div className="flex-1 bg-[#a2ad80]" />
        </div>
      </div>
    </div>
  );
}
